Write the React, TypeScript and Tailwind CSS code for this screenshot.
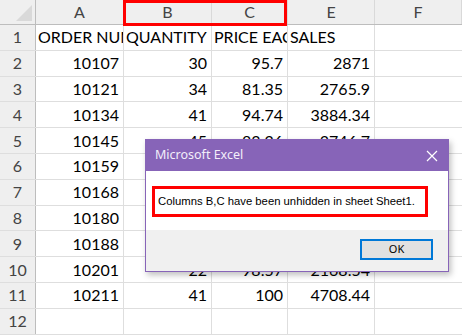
// Excel sheet with the "columns unhidden" message box on top.

const cols = [
  { id: 'A', w: 'w-[88px]' },
  { id: 'B', w: 'w-[88px]' },
  { id: 'C', w: 'w-[76px]' },
  { id: 'E', w: 'w-[87px]' },
  { id: 'F', w: 'flex-1' },
];

// rows 6-9 of B, C, E sit under the dialog, so they are left blank
const rows: string[][] = [
  ['ORDER NUMBER', 'QUANTITY', 'PRICE EACH', 'SALES'],
  ['10107', '30', '95.7', '2871'],
  ['10121', '34', '81.35', '2765.9'],
  ['10134', '41', '94.74', '3884.34'],
  ['10145', '45', '83.26', '3746.7'],
  ['10159', '', '', ''],
  ['10168', '', '', ''],
  ['10180', '', '', ''],
  ['10188', '', '', ''],
  ['10201', '22', '98.57', '2168.54'],
  ['10211', '41', '100', '4708.44'],
  ['', '', '', ''],
];

export default function App() {
  return (
    <div className="relative w-[462px] h-[336px] overflow-hidden bg-white" style={{ fontFamily: 'Lato, "Open Sans", sans-serif' }}>
      {/* Column headers */}
      <div className="flex h-[25px] bg-[#efefef] border-b border-[#bdbdbd]">
        <div className="relative w-[36px] border-r border-[#bdbdbd]">
          <div className="absolute right-[3px] bottom-[3px] w-0 h-0 border-l-[16px] border-l-transparent border-b-[16px] border-b-[#d9d9d9]" />
        </div>
        {cols.map((c) => (
          <div key={c.id} className={`${c.w} flex items-center justify-center text-[16px] text-[#444] border-r border-[#d9d9d9]`}>
            {c.id}
          </div>
        ))}
      </div>

      {/* Red box round hidden columns B,C */}
      <div className="absolute left-[123px] top-0 w-[164px] h-[26px] border-[3px] border-[#ff0000]" />

      {/* Rows */}
      {rows.map((r, i) => (
        <div key={i} className="flex h-[25.8px] border-b border-[#dedede]">
          <div className="w-[36px] flex items-center justify-center bg-[#efefef] border-r border-[#bdbdbd] text-[16px] text-[#444]">
            {i + 1}
          </div>
          {r.map((v, j) => (
            <div
              key={j}
              className={`${cols[j].w} flex items-center overflow-hidden whitespace-nowrap text-[16px] text-black border-r border-[#dedede] ${i === 0 ? 'justify-start pl-[2px]' : 'justify-end px-[4px]'}`}
            >
              {v}
            </div>
          ))}
          <div className="flex-1" />
        </div>
      ))}

      {/* Message box */}
      <div
        className="absolute left-[145px] top-[139px] w-[304px] h-[133px] flex flex-col border border-[#8764b8] shadow-[2px_3px_6px_rgba(0,0,0,0.25)]"
        style={{ fontFamily: '"Noto Sans", "Open Sans", sans-serif' }}
      >
        <div className="h-[31px] bg-[#8764b8] flex items-center justify-between pl-[9px] pr-[8px]">
          <span className="text-[12.5px] text-[#f3eefa]">Microsoft Excel</span>
          <svg width="12" height="12" viewBox="0 0 12 12" className="mr-[2px]">
            <path d="M1 1L11 11M11 1L1 11" stroke="#fff" strokeWidth="1.2" />
          </svg>
        </div>
        <div className="h-[59px] bg-white px-[6px] pt-[15px]">
          <div className="w-[276px] h-[31px] border-[3px] border-[#ff0000] flex items-center pl-[3px] text-[11.3px] text-black whitespace-nowrap" style={{ fontFamily: '"Liberation Sans", sans-serif' }}>
            Columns B,C have been unhidden in sheet Sheet1.
          </div>
        </div>
        <div className="flex-1 bg-[#f0f0f0] flex justify-end items-start pt-[9px] pr-[15px]">
          <button className="w-[73px] h-[21px] bg-[#e1e1e1] border-2 border-[#0078d7] text-[11px] text-black flex items-center justify-center">
            OK
          </button>
        </div>
      </div>
    </div>
  );
}
